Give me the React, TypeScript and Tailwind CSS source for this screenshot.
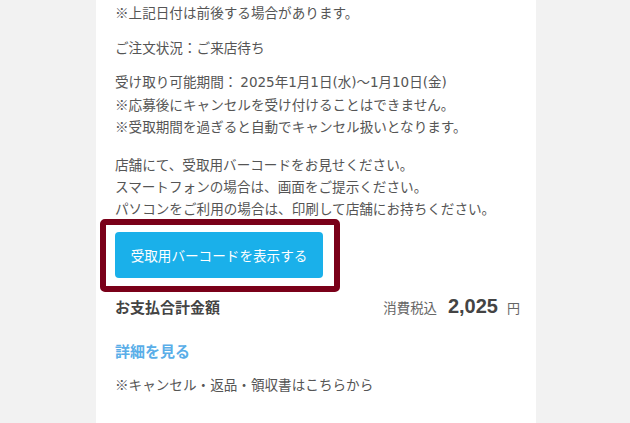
import React from "react";

export default function App() {
  const font = { fontFamily: '"Noto Sans CJK JP", sans-serif' };
  return (
    <div className="w-[630px] h-[423px] bg-[#f2f2f2] overflow-hidden" style={font}>
      <div className="ml-[96px] w-[440px] h-[423px] bg-white pl-[19px] pr-[16px] pt-[1px] text-[#555] text-[13.6px] leading-[22px]">
        <p>※上記日付は前後する場合があります。</p>
        <p className="mt-[13px]">ご注文状況：ご来店待ち</p>
        <div className="mt-[12px]">
          <p className="h-[23px]">
            受け取り可能期間：
            <span className="ml-[3px] leading-[10px] font-['DejaVu_Sans','Noto_Sans_CJK_JP',sans-serif] text-[13.5px]">
              2025年1月1日(水)〜1月10日(金)
            </span>
          </p>
          <p>※応募後にキャンセルを受け付けることはできません。</p>
          <p>※受取期間を過ぎると自動でキャンセル扱いとなります。</p>
        </div>
        <div className="mt-[16px]">
          <p>店舗にて、受取用バーコードをお見せください。</p>
          <p>スマートフォンの場合は、画面をご提示ください。</p>
          <p>パソコンをご利用の場合は、印刷して店舗にお持ちください。</p>
        </div>
        <div className="-ml-[15px] w-[240px] h-[73px] border-[6px] border-[#7a0019] rounded-[5px] pl-[9px] pt-[7px]">
          <button className="w-[208px] h-[46px] bg-[#1ab0ea] rounded-[4px] text-white text-[13.6px] flex items-center justify-center">
            受取用バーコードを表示する
          </button>
        </div>
        <div className="mt-[3px] flex items-center justify-between">
          <span className="font-bold text-[15px] text-[#444]">お支払合計金額</span>
          <span className="flex items-baseline">
            <span className="text-[13.4px] text-[#666]">消費税込</span>
            <span className="ml-[11px] font-bold text-[20px] text-[#444] font-['Liberation_Sans',sans-serif]">2,025</span>
            <span className="ml-[9px] text-[13px] text-[#666]">円</span>
          </span>
        </div>
        <p className="mt-[21px] font-bold text-[15px] text-[#5aaee8]">詳細を見る</p>
        <p className="mt-[11px]">※キャンセル・返品・領収書はこちらから</p>
      </div>
    </div>
  );
}
